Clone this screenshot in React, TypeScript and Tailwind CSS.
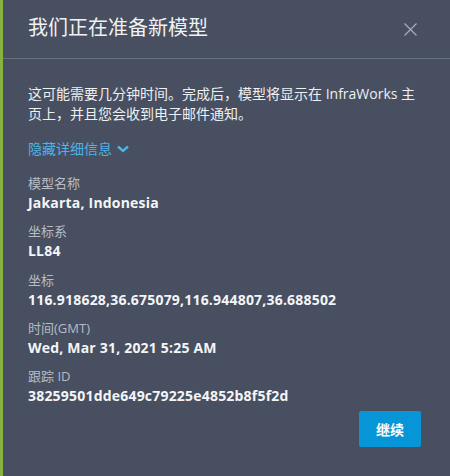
const details = [
  { label: "模型名称", value: "Jakarta, Indonesia" },
  { label: "坐标系", value: "LL84" },
  { label: "坐标", value: "116.918628,36.675079,116.944807,36.688502" },
  { label: "时间(GMT)", value: "Wed, Mar 31, 2021 5:25 AM" },
  { label: "跟踪 ID", value: "38259501dde649c79225e4852b8f5f2d" },
];

export default function App() {
  return (
    <div
      className="w-[450px] h-[476px] flex bg-[#474f60] text-[#f2f3f5] overflow-hidden"
      style={{ fontFamily: '"Open Sans", "Noto Sans CJK SC", sans-serif' }}
    >
      <div className="w-[3px] shrink-0 bg-[#87b340]" />
      <div className="flex-1 flex flex-col">
        <div className="h-[59px] flex items-start justify-between pl-[25px] pr-[33px] pt-[14px] border-b border-[#66707f]">
          <h1 className="text-[20px] leading-[28px] font-normal text-[#f0f1f3]">我们正在准备新模型</h1>
          <button className="mt-[9px] w-[13px] h-[13px] text-[#aab0bb]">
            <svg viewBox="0 0 13 13" className="w-[13px] h-[13px]" fill="none" stroke="currentColor" strokeWidth="1.2">
              <path d="M0.5 0.5 L12.5 12.5 M12.5 0.5 L0.5 12.5" />
            </svg>
          </button>
        </div>

        <div className="flex flex-col pl-[25px] pr-[29px] pt-[25px]">
          <p className="text-[14px] leading-[20px] text-[#eef0f2]">
            这可能需要几分钟时间。完成后，模型将显示在 InfraWorks 主页上，并且您会收到电子邮件通知。
          </p>

          <button className="mt-[15px] flex items-center gap-[5px] text-[14px] leading-[20px] text-[#4eb3e6] self-start">
            隐藏详细信息
            <svg viewBox="0 0 12 8" className="w-[12px] h-[8px]" fill="none" stroke="currentColor" strokeWidth="2.4">
              <polyline points="1,1.5 6,6 11,1.5" />
            </svg>
          </button>

          <div className="mt-[15px] flex flex-col gap-[9.25px]">
            {details.map((d) => (
              <div key={d.label} className="flex flex-col">
                <span className="text-[13px] leading-[19px] text-[#b7bcc5]">{d.label}</span>
                <span className="text-[14px] leading-[20px] font-bold text-[#f4f5f7] tracking-[0.2px]">{d.value}</span>
              </div>
            ))}
          </div>

          <div className="mt-[5px] flex justify-end">
            <button className="w-[62px] h-[36px] rounded-[2px] bg-[#0696d7] text-white text-[14px] font-bold">
              继续
            </button>
          </div>
        </div>
      </div>
    </div>
  );
}
